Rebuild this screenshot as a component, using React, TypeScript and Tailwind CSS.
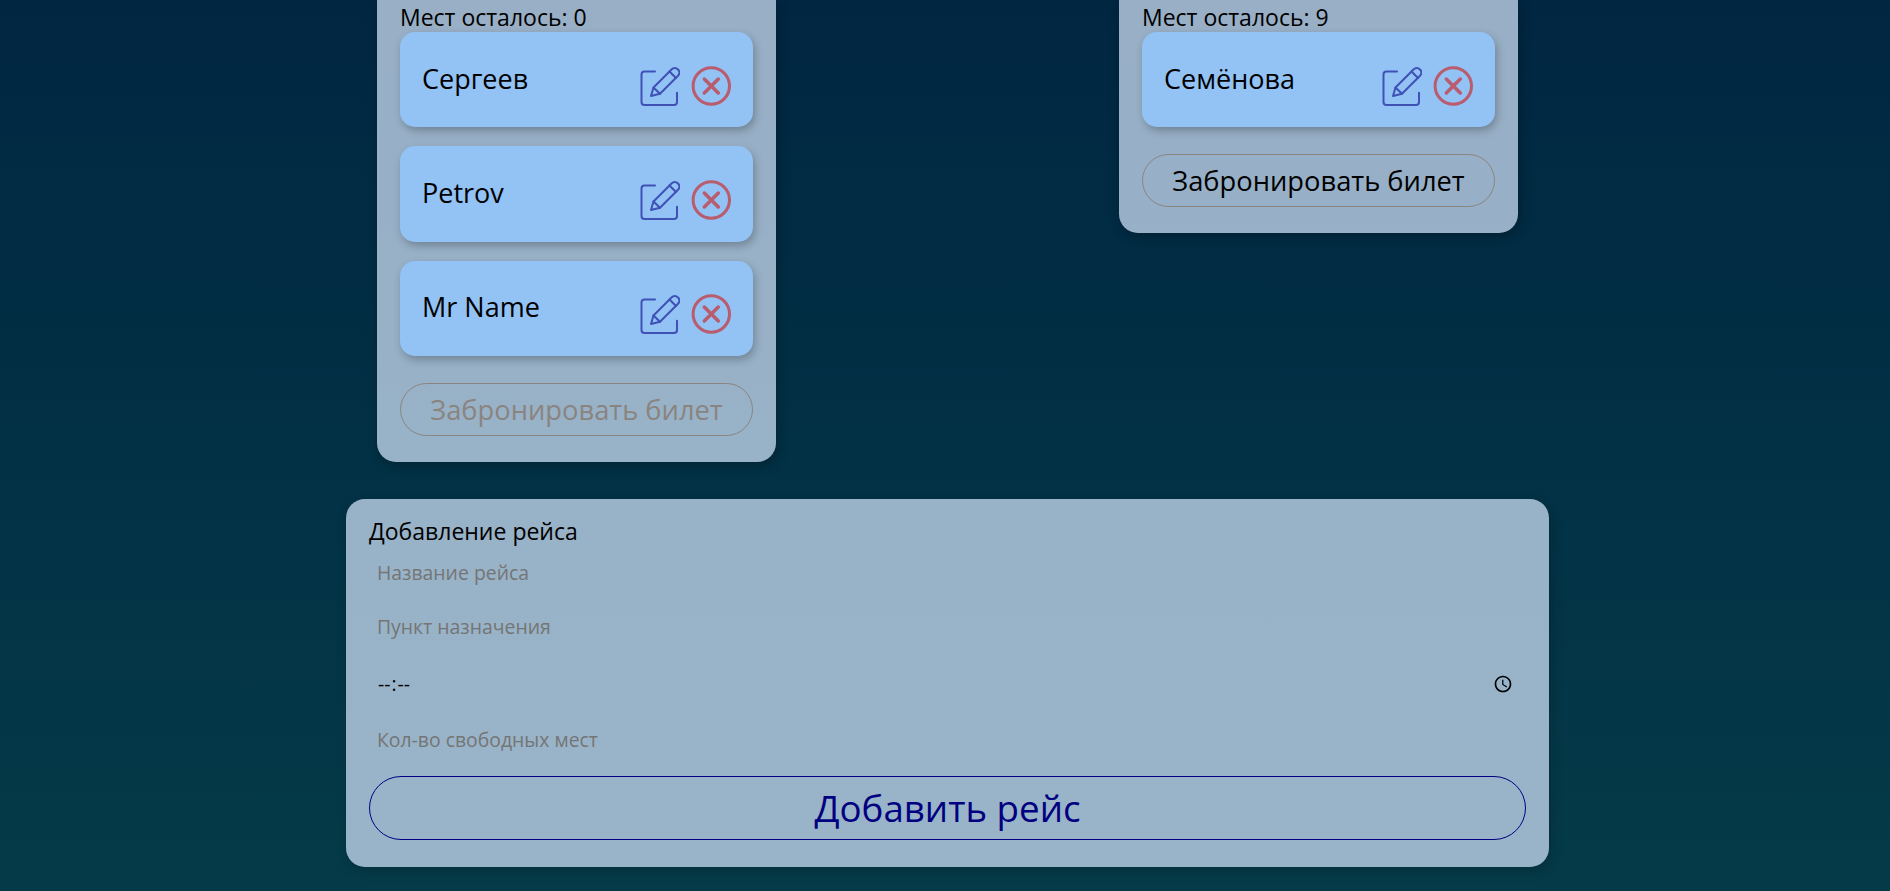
const font = "font-['Open_Sans','Noto_Sans',sans-serif]";

function EditIcon() {
  return (
    <svg viewBox="0 0 40 40" className="w-10 h-10" fill="none" stroke="#3f51b5" strokeWidth="2" strokeLinecap="round" strokeLinejoin="round">
      <path d="M15 5.500H4.500a3 3 0 0 0-3 3V36a3 3 0 0 0 3 3H34a3 3 0 0 0 3-3V26.700" />
      <path d="M11 30l2.500-8.500 18-18c2-2 4.500-2 6.500 0 1.800 1.800 1.800 4.300 0 6.200l-18 18z" />
      <path d="M13.500 21.500l6.500 6.200M29.500 5.500l6.500 6.500" />
    </svg>
  );
}

function CancelIcon() {
  return (
    <svg viewBox="0 0 40 40" className="w-10 h-10" fill="none" stroke="#b85c6e" strokeLinecap="round">
      <circle cx="20.300" cy="20" r="18.200" strokeWidth="3" />
      <path d="M13.300 13l14 14M27.300 13l-14 14" strokeWidth="3.500" />
    </svg>
  );
}

function Passenger({ name }: { name: string }) {
  return (
    <div className="h-[95.4px] rounded-[15px] bg-[#93c2f5] shadow-[2px_4px_8px_rgba(0,0,0,0.25)] flex items-center justify-between pl-[22px] pr-[22px]">
      <span className="text-[27px] leading-none text-black -mt-[3px]">{name}</span>
      <div className="flex items-center gap-[11px] mt-[12px]">
        <EditIcon />
        <CancelIcon />
      </div>
    </div>
  );
}

function FlightCard({ seats, names, disabled }: { seats: number; names: string[]; disabled?: boolean }) {
  return (
    <div className="w-[399px] rounded-b-[19px] bg-[#cbddf3]/75 shadow-[2px_4px_12px_rgba(0,0,0,0.25)] px-[23px] pb-[26.4px]">
      <div className="h-[32px] pt-[3px] text-[23px] leading-[28px] text-black">Мест осталось: {seats}</div>
      <div className="flex flex-col gap-[19px]">
        {names.map((n) => (
          <Passenger key={n} name={n} />
        ))}
      </div>
      <button
        disabled={disabled}
        className={
          "mt-[26.6px] w-full h-[53px] rounded-full border border-[#8a8480] text-[27.3px] leading-none " +
          (disabled ? "text-[#8a8480]" : "text-black")
        }
      >
        Забронировать билет
      </button>
    </div>
  );
}

const inputClass =
  "block w-full bg-transparent pl-[8px] text-[19.4px] text-black outline-none placeholder:text-[#757575]";

export default function App() {
  return (
    <div className={"h-[891px] overflow-hidden bg-gradient-to-b from-[#012642] to-[#053b48] " + font}>
      <div className="flex items-start gap-[343px] pl-[377px]">
        <FlightCard seats={0} names={["Сергеев", "Petrov", "Mr Name"]} disabled />
        <FlightCard seats={9} names={["Семёнова"]} />
      </div>
      <div className="ml-[346px] mt-[36.8px] w-[1203px] h-[368px] rounded-[19px] bg-[#cbddf3]/75 shadow-[2px_4px_12px_rgba(0,0,0,0.2)] px-[23px] pt-[17px]">
        <div className="h-[30px] text-[23px] leading-[30px] text-black">Добавление рейса</div>
        <input className={inputClass + " h-[54px]"} placeholder="Название рейса" />
        <input className={inputClass + " h-[54px]"} placeholder="Пункт назначения" />
        <input
          type="time"
          className={inputClass + " h-[57px] pt-[3px] pr-[10px] tracking-[0.08em] [&::-webkit-datetime-edit-ampm-field]:hidden"}
        />
        <input className={inputClass + " h-[57px]"} placeholder="Кол-во свободных мест" />
        <button className="mt-[8px] w-full h-[64px] rounded-full border border-[#000080] text-[36.7px] leading-none text-[#000080]">
          Добавить рейс
        </button>
      </div>
    </div>
  );
}
